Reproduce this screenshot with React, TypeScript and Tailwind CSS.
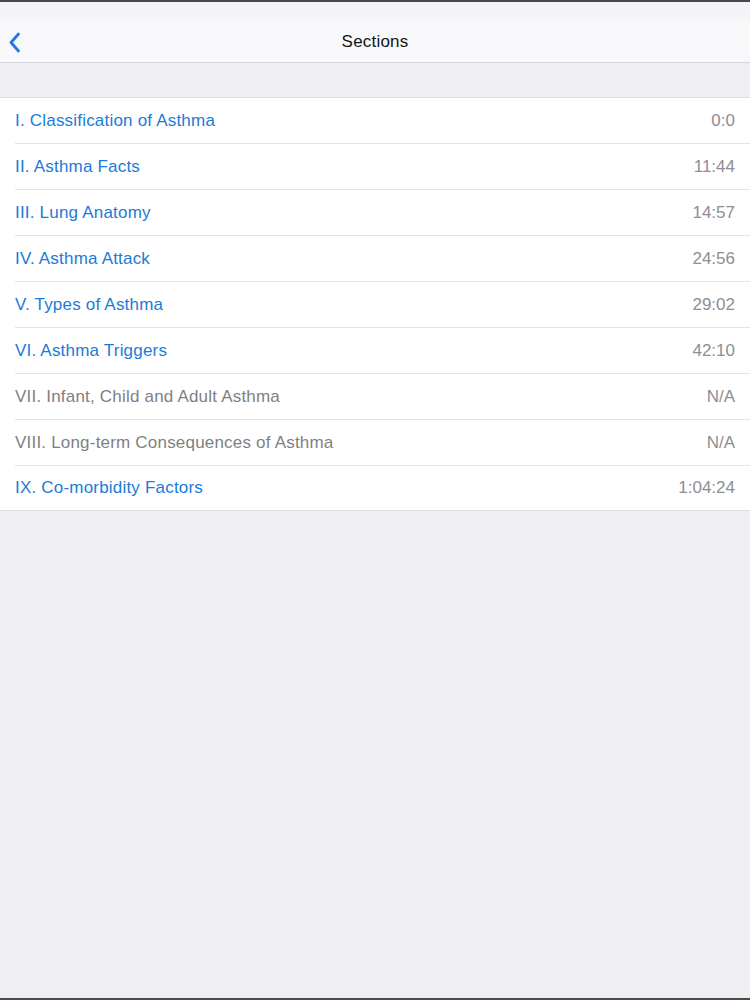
import React from "react";

type Section = { title: string; time: string; enabled: boolean };

const sections: Section[] = [
  { title: "I. Classification of Asthma", time: "0:0", enabled: true },
  { title: "II. Asthma Facts", time: "11:44", enabled: true },
  { title: "III. Lung Anatomy", time: "14:57", enabled: true },
  { title: "IV. Asthma Attack", time: "24:56", enabled: true },
  { title: "V. Types of Asthma", time: "29:02", enabled: true },
  { title: "VI. Asthma Triggers", time: "42:10", enabled: true },
  { title: "VII. Infant, Child and Adult Asthma", time: "N/A", enabled: false },
  { title: "VIII. Long-term Consequences of Asthma", time: "N/A", enabled: false },
  { title: "IX. Co-morbidity Factors", time: "1:04:24", enabled: true },
];

export default function App() {
  return (
    <div
      className="flex h-[1000px] flex-col overflow-hidden border-t-2 border-b-2 border-[#4a4a4e] bg-[#efeef3]"
      style={{ fontFamily: '"Liberation Sans", Arial, sans-serif' }}
    >
      {/* status bar */}
      <div className="h-[17px] bg-[#f4f4f6]" />

      {/* nav bar */}
      <div className="relative flex h-[44px] items-center justify-center border-b border-[#d6d6da] bg-[#f8f8fa]">
        <button className="absolute left-[4px] top-[11px] flex h-6 w-5 items-center justify-center">
          <svg width="13" height="21" viewBox="0 0 13 21" fill="none">
            <path
              d="M10.5 2L3 10.5L10.5 19"
              stroke="#1f7ae0"
              strokeWidth="2.8"
              strokeLinecap="round"
              strokeLinejoin="round"
            />
          </svg>
        </button>
        <h1 className="pt-[2px] text-[17px] tracking-[0.2px] text-[#141414]">Sections</h1>
      </div>

      <div className="h-[34px]" />

      {/* list */}
      <ul className="border-t border-b border-[#dcdce0] bg-white">
        {sections.map((s, i) => {
          const last = i === sections.length - 1;
          return (
            <li key={s.title} className="pl-[15px]">
              <div
                className={
                  "flex items-center justify-between pr-[15px] " +
                  (last ? "h-[44px]" : "h-[46px] border-b border-[#e3e3e6]")
                }
              >
                <span
                  className={
                    "text-[17px] tracking-[0.2px] " +
                    (s.enabled ? "text-[#1a7bd8]" : "text-[#7f7f83]")
                  }
                >
                  {s.title}
                </span>
                <span className="text-[17px] text-[#8e8e93]">{s.time}</span>
              </div>
            </li>
          );
        })}
      </ul>
    </div>
  );
}
